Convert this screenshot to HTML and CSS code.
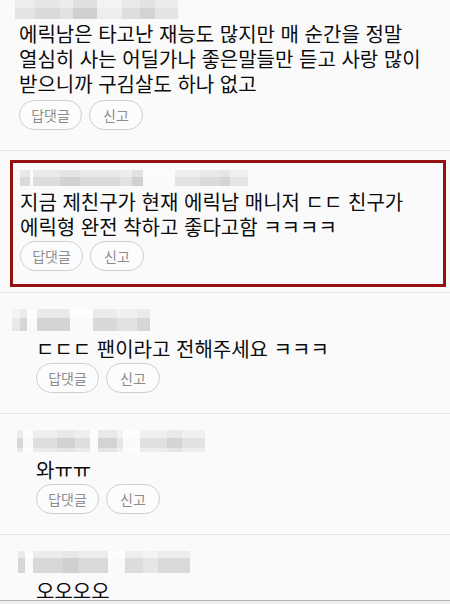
FILE: index.html
```html
<!DOCTYPE html>
<html lang="ko">
<head>
	<meta charset="UTF-8">
	<title>댓글</title>
	<link rel="stylesheet" href="styles.css">
</head>
<body>
	<ul class="cmt_list">
		<!-- 위에서 잘린 댓글 -->
		<li class="cmt cmt_first">
			<div class="nick nick1"></div>
			<p class="txt">에릭남은 타고난 재능도 많지만 매 순간을 정말 열심히 사는 어딜가나 좋은말들만 듣고 사랑 많이 받으니까 구김살도 하나 없고</p>
			<div class="btns"><a href="javascript:;" class="btn">답댓글</a><a href="javascript:;" class="btn">신고</a></div>
		</li>
		<!-- 빨간 박스 표시한 댓글 -->
		<li class="cmt cmt_mark">
			<div class="mark_box">
				<div class="nick nick2"></div>
				<p class="txt">지금 제친구가 현재 에릭남 매니저 ㄷㄷ 친구가 에릭형 완전 착하고 좋다고함 ㅋㅋㅋㅋ</p>
				<div class="btns"><a href="javascript:;" class="btn">답댓글</a><a href="javascript:;" class="btn">신고</a></div>
			</div>
		</li>
		<li class="cmt reply">
			<div class="nick nick3"></div>
			<p class="txt">ㄷㄷㄷ 팬이라고 전해주세요 ㅋㅋㅋ</p>
			<div class="btns"><a href="javascript:;" class="btn">답댓글</a><a href="javascript:;" class="btn">신고</a></div>
		</li>
		<li class="cmt reply">
			<div class="nick nick4"></div>
			<p class="txt">와ㅠㅠ</p>
			<div class="btns"><a href="javascript:;" class="btn">답댓글</a><a href="javascript:;" class="btn">신고</a></div>
		</li>
		<li class="cmt reply">
			<div class="nick nick5"></div>
			<p class="txt">오오오오</p>
			<div class="btns"><a href="javascript:;" class="btn">답댓글</a><a href="javascript:;" class="btn">신고</a></div>
		</li>
	</ul>
	<div class="bottom_edge"></div>
</body>
</html>
```

FILE: styles.css
```css
*{
	padding:0;
	margin:0;
}
ul,li{
	list-style:none;
}
html{
	overflow:hidden;
}
body{
	background:#fafafa;
	font-family:"Noto Sans CJK KR","Noto Sans",sans-serif;
	color:#0c0c0c;
}
a{
	text-decoration:none;
}
/**댓글 목록, 첫 댓글은 위가 잘려있음**/
.cmt_list{
	margin-top:-19px;
}
.cmt{
	padding:16px 8px 20px 19px;
	border-bottom:1px solid #e6e6e6;
}
.txt{
	font-size:20px;
	line-height:25px;
	margin-top:5px;
	word-break:keep-all;
}
.cmt_first .txt{
	margin-top:2px;
}
.cmt_first .btns{
	margin-top:4px;
}
.btns{
	display:flex;
	gap:7px;
	margin-top:2px;
}
.btn{
	display:block;
	box-sizing:border-box;
	min-width:63px;
	height:30px;
	line-height:28px;
	padding:0 11px;
	border:1px solid #cfcfcf;
	border-radius:15px;
	background:#fcfcfc;
	font-size:14px;
	color:#8c8c8c;
	text-align:center;
}
.btn + .btn{
	min-width:54px;
}
/**빨간 테두리 박스**/
.cmt_mark{
	padding:9px 4px 5px 10px;
}
.mark_box{
	border:3px solid #96100f;
	padding:5px 7px 13px 7px;
}
.cmt_mark .txt{
	margin-top:3px;
}
/**답글은 들여쓰기**/
.reply .txt,
.reply .btns{
	margin-left:17px;
}
/**모자이크 처리된 닉네임**/
.nick{
	height:22px;
	filter:blur(0.6px);
}
.nick1{
	width:163px;
	margin-left:-4px;
	background:
		linear-gradient(180deg,rgba(255,255,255,0.35) 0 50%,transparent 50%),
		linear-gradient(90deg,#e4e4e4 0 20px,#d9d9d9 20px 45px,#e2e2e2 45px 58px,#cfcfcf 58px 82px,#ededed 82px 107px,#dedede 107px 125px,#d3d3d3 125px 140px,#e3e3e3 140px 163px);
}
.nick2{
	width:228px;
	height:16px;
	margin-top:2px;
	background:
		linear-gradient(180deg,rgba(255,255,255,0.4) 0 45%,transparent 45%),
		linear-gradient(90deg,#dadada 0 10px,transparent 10px 13px,#dcdcdc 13px 40px,#d2d2d2 40px 60px,#dadada 60px 100px,#e2e2e2 100px 112px,#d0d0d0 112px 123px,transparent 123px 155px,#e3e3e3 155px 180px,#dadada 180px 200px,#d4d4d4 200px 210px,#e5e5e5 210px 228px);
}
.nick3{
	width:138px;
	margin-left:-7px;
	background:
		linear-gradient(180deg,rgba(255,255,255,0.5) 0 40%,transparent 40%),
		linear-gradient(90deg,#e8e8e8 0 8px,#d6d6d6 8px 15px,transparent 15px 25px,#d4d4d4 25px 58px,transparent 58px 81px,#d8d8d8 81px 105px,#e2e2e2 105px 125px,#d6d6d6 125px 138px);
}
.nick4{
	width:188px;
	margin-left:-2px;
	background:
		linear-gradient(180deg,rgba(255,255,255,0.5) 0 35%,transparent 35% 80%,rgba(255,255,255,0.4) 80%),
		linear-gradient(90deg,#d8d8d8 0 6px,transparent 6px 16px,#dedede 16px 40px,#d2d2d2 40px 58px,#dedede 58px 73px,transparent 73px 81px,#d3d3d3 81px 100px,#e6e6e6 100px 106px,transparent 106px 123px,#e0e0e0 123px 150px,#d4d4d4 150px 165px,#e2e2e2 165px 188px);
}
.nick5{
	width:172px;
	margin-left:-1px;
	background:
		linear-gradient(180deg,rgba(255,255,255,0.5) 0 30%,transparent 30%),
		linear-gradient(90deg,#d6d6d6 0 7px,transparent 7px 15px,#d8d8d8 15px 45px,#cfcfcf 45px 60px,#d9d9d9 60px 90px,transparent 90px 107px,#dcdcdc 107px 125px,#e6e6e6 125px 140px,#d9d9d9 140px 172px);
}
/**화면 아래 경계선**/
.bottom_edge{
	position:fixed;
	left:0;
	right:0;
	bottom:0;
	height:3px;
	border-top:1px solid #b4b4b4;
	background:#f0f0f0;
}
```
